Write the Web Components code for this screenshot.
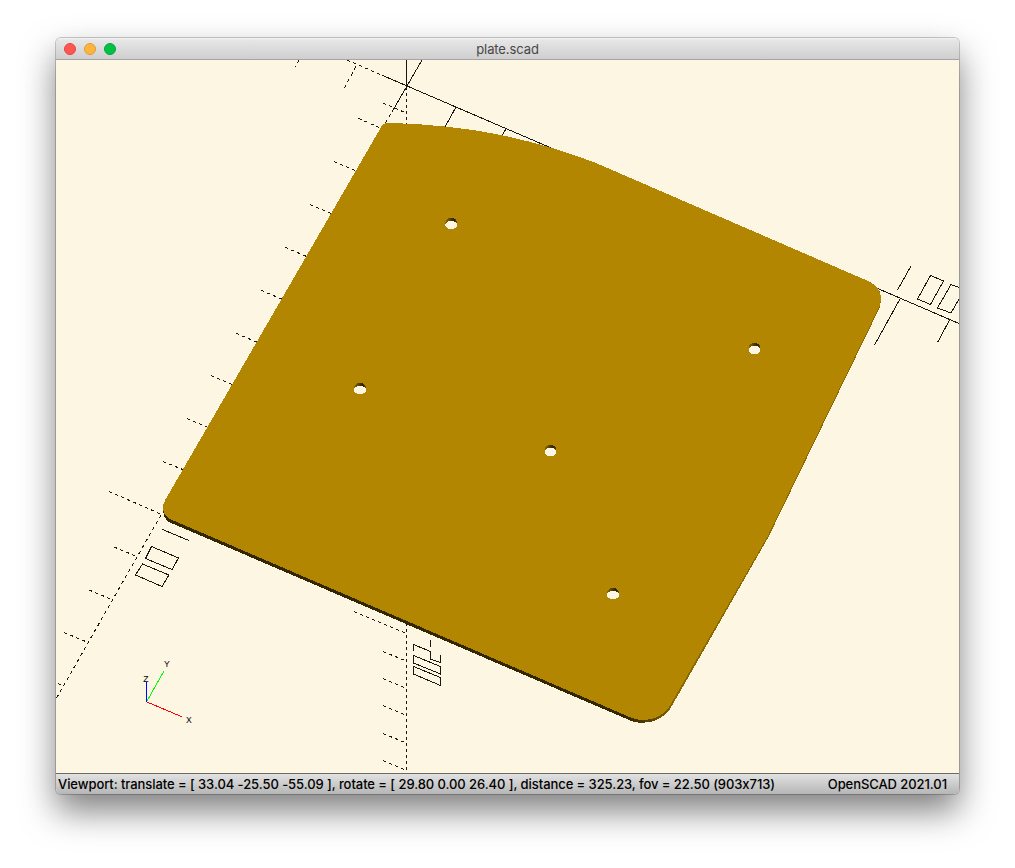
<!DOCTYPE html>
<html lang="en">
<head>
<meta charset="utf-8">
<title>plate.scad</title>
<style>
body{margin:0;background:#fff;font-family:Inter,"Liberation Sans",sans-serif}
</style>
</head>
<body>
<scad-window>
<title-bar slot="top">plate.scad</title-bar>
<scad-viewport></scad-viewport>
<status-bar slot="bottom"><span>Viewport: translate = [ 33.04 -25.50 -55.09 ], rotate = [ 29.80 0.00 26.40 ], distance = 325.23, fov = 22.50 (903x713)</span><span slot="version">OpenSCAD 2021.01</span></status-bar>
</scad-window>
<script>
class Base extends HTMLElement{
  constructor(){super();this.attachShadow({mode:'open'}).innerHTML=this.view();}
}
customElements.define('scad-window',class extends Base{
  view(){return `<style>
:host{display:block;box-sizing:border-box;width:1015px;height:868px;padding:38px 56px 0;overflow:hidden}
.frame{width:903px;height:756px;display:flex;flex-direction:column;border-radius:5px;box-shadow:0 0 0 1px rgba(0,0,0,.2),0 17px 34px rgba(0,0,0,.5)}
</style><div class="frame"><slot name="top"></slot><slot></slot><slot name="bottom"></slot></div>`}
});
customElements.define('title-bar',class extends Base{
  view(){return `<style>
:host{display:grid;grid-template-columns:1fr auto 1fr;align-items:center;box-sizing:border-box;height:22px;padding-left:8px;border-bottom:1px solid #a5a5a5;border-radius:5px 5px 0 0;background:linear-gradient(#f4f4f4 0,#e6e6e6 2px,#cfcfcf);color:#474747;font-size:13px;line-height:21px}
.dots{display:flex;gap:8px}
i{width:12px;height:12px;border-radius:50%;box-sizing:border-box;background:#ff5650;border:1px solid #e2463f}
i:nth-child(2){background:#ffb43e;border-color:#df9c34}
i:nth-child(3){background:#00c146;border-color:#08a33c}
.t{margin-right:8px;letter-spacing:-.1px;padding-top:1px}
</style><div class="dots"><i></i><i></i><i></i></div><span class="t"><slot></slot></span>`}
});
customElements.define('status-bar',class extends Base{
  view(){return `<style>
:host{display:flex;justify-content:space-between;align-items:center;box-sizing:border-box;height:21px;padding:0 12px 0 2px;border-top:1px solid #6c6c66;border-radius:0 0 5px 5px;background:linear-gradient(#e2e2e2,#b6b6b6);color:#000;font-size:13px;font-weight:500;line-height:20px;letter-spacing:-.07px;font-feature-settings:"calt" 0;white-space:pre}
</style><slot></slot><slot name="version"></slot>`}
});
customElements.define('scad-viewport',class extends Base{
  view(){
    const seg=a=>a.map(([x,y,u,v])=>`M${x} ${y}L${u} ${v}`).join('');
    // Axes and tick marks on the positive side
    const solid=seg([[382,75.2,959,323.5],[422,60,394,108.5],[406.5,60,406.5,86],
      [456,107,445,127],[506,129,500,139],[911,266,897.5,290],[900,299,874.5,345],[949.5,320,937.5,342.5],
      [162,529.3,189,540.5],[430.5,640,430.5,647]]);
    // Shallow dashed ticks and the negative X axis
    const ticks=seg([[347,60,383,75.7],[383,103,405,112.5],[358.5,118.5,380,127.7],[334,161.5,355,170.5],[310,204.5,331,213.5],
      [285,247.3,307,256.6],[261,290.3,282,299.2],[236,333.3,257,342.2],[211,375.5,232,384.5],[187,418.5,208,427.4],[163,461.5,184,470],
      [109,491.5,160,513.7],[114,547,138,557],[89,590,113,600],[64,632.5,88,642.5],[58,683.5,64,686],[183,527.5,185,528.5],
      [354,611.5,405,633],[383,651.5,405,660.5],[383,678.5,405,687.8],[383,705.5,405,714.8],[383,733.5,405,742.5],[383,760.5,405,769.8]]);
    const steep=seg([[394,108.5,385,124],[161,515,56,699],[299,60,295,67],[356,66.5,344,88.5]]);
    const holes=[[451.3,224],[754.5,349],[360,389],[550.5,451],[613,594]].map(([x,y])=>
      `<ellipse cx="${x}" cy="${y-.7}" rx="6" ry="5.5" fill="url(#bore)"/><ellipse cx="${x}" cy="${y+1}" rx="6" ry="4.2" fill="#fdf6e3"/>`).join('');
    return `<style>
:host{display:block;height:713px;background:#fdf6e3}
svg{display:block}
.l{fill:none;stroke:#1c1712;stroke-width:1}
text{font:8.6px "Liberation Sans",sans-serif;fill:#000}
</style>
<svg width="903" height="713" viewBox="56 60 903 713" shape-rendering="crispEdges">
<defs><linearGradient id="bore"><stop offset="0" stop-color="#8f6c00"/><stop offset=".55" stop-color="#443300"/><stop offset=".75" stop-color="#2c2100"/><stop offset="1" stop-color="#6b5100"/></linearGradient>
<linearGradient id="side" gradientUnits="userSpaceOnUse" x1="625" y1="0" x2="675" y2="0"><stop offset="0" stop-color="#332700"/><stop offset=".35" stop-color="#4a3800"/><stop offset="1" stop-color="#8a6800"/></linearGradient></defs>
<path class="l" d="${solid}"/>
<path class="l" stroke-dasharray="3.26 3.26" d="${ticks}"/>
<path class="l" stroke-dasharray="3.5 3.4" d="${steep}"/>
<path class="l" stroke-dasharray="3 3" d="M406.5 87V124M406.5 623V771"/>
<path class="l" d="M930.5 275.5L943.5 281 930.5 304.5 917.5 299zM959 287.5L951 284.5 937.5 308 951 313 959 299M151.5 546.5L178.5 558 172 569.5 145.5 558.5zM142.5 564L169 575 162 586.5 135.5 575zM413.5 650.5V644.5L430.5 651.5V659L440.5 662.5V655M413.5 655.5L440.5 666.5V674L413.5 663zM413.5 666.5L440.5 677.5V685.5L413.5 674z"/>
<path fill="url(#side)" d="M382 126L388 123 868 281 875 285 880 292 881 299 880 307 768.7 536.5 669.5 710Q659 722.5 643 722.8 635 722.8 629 720L169 522Q163 518 163 508z"/>
<path fill="#b28600" d="M380 129Q382 123 388 122.8 450 124.5 502 135.2 552 146 596 163L868 281Q874 284 877.5 288 881 293 881 300L880 305 767.8 536 668.5 708Q659 719.8 643 720 636 720 630 717.2L170 519Q163 515 163 507.5 163 503.5 165.2 500z"/>
${holes}
<path d="M146.5 702V682" stroke="#00f" fill="none"/><path d="M147 701L163.7 671.5" stroke="#0f0" fill="none"/><path d="M147 702L182 716.8" stroke="red" fill="none"/>
<text x="143.2" y="681.5">Z</text><text x="164" y="667.3">Y</text><text x="186" y="723">X</text>
</svg>`}
});
</script>
</body>
</html>
